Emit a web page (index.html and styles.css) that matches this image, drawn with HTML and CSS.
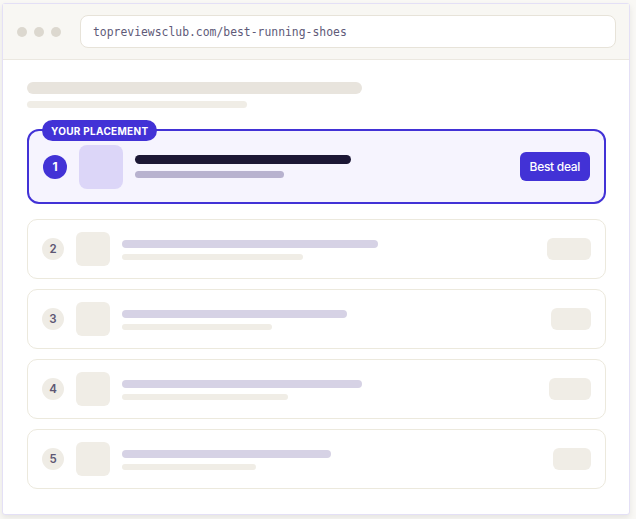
FILE: index.html
```html
<!DOCTYPE html>
<html>
<head>
<meta charset="utf-8">
<link rel="stylesheet" href="styles.css">
</head>
<body>
<div class="window">
  <div class="titlebar">
    <div class="dots"><span class="dot"></span><span class="dot"></span><span class="dot"></span></div>
    <div class="url">topreviewsclub.com/best-running-shoes</div>
  </div>
  <div class="content">
    <div class="sk-title"></div>
    <div class="sk-sub"></div>
    <div class="list">
      <div class="row featured">
        <span class="badge">YOUR PLACEMENT</span>
        <span class="rank">1</span>
        <span class="thumb"></span>
        <div class="lines">
          <span class="l1" style="width:216px"></span>
          <span class="l2" style="width:149px"></span>
        </div>
        <span class="cta">Best deal</span>
      </div>
      <div class="row">
        <span class="rank">2</span>
        <span class="thumb"></span>
        <div class="lines">
          <span class="l1" style="width:256px"></span>
          <span class="l2" style="width:181px"></span>
        </div>
        <span class="pill" style="width:44px"></span>
      </div>
      <div class="row">
        <span class="rank">3</span>
        <span class="thumb"></span>
        <div class="lines">
          <span class="l1" style="width:225px"></span>
          <span class="l2" style="width:150px"></span>
        </div>
        <span class="pill" style="width:40px"></span>
      </div>
      <div class="row">
        <span class="rank">4</span>
        <span class="thumb"></span>
        <div class="lines">
          <span class="l1" style="width:240px"></span>
          <span class="l2" style="width:166px"></span>
        </div>
        <span class="pill" style="width:42px"></span>
      </div>
      <div class="row">
        <span class="rank">5</span>
        <span class="thumb"></span>
        <div class="lines">
          <span class="l1" style="width:209px"></span>
          <span class="l2" style="width:134px"></span>
        </div>
        <span class="pill" style="width:38px"></span>
      </div>
    </div>
  </div>
</div>
</body>
</html>
```

FILE: styles.css
```css
* { box-sizing: border-box; }
html, body { margin: 0; padding: 0; }
body {
  background: #f9f8f5;
  font-family: Inter, "Noto Sans", sans-serif;
  width: 636px;
  height: 519px;
  overflow: hidden;
}
.window {
  margin: 3px 0 0 2px;
  width: 628px;
  height: 512px;
  background: #ffffff;
  border: 1px solid #e4e0f6;
  border-radius: 3px;
  box-shadow: 0 3px 6px rgba(0, 0, 0, 0.08);
  display: flex;
  flex-direction: column;
}
.titlebar {
  height: 56px;
  background: #f8f7f3;
  border-bottom: 1px solid #ebe8e0;
  display: flex;
  align-items: center;
  padding: 0 13px 0 14px;
  gap: 19px;
}
.dots { display: flex; gap: 7px; }
.dot {
  width: 10px;
  height: 10px;
  border-radius: 50%;
  background: #dcd8cf;
}
.url {
  flex: 1;
  height: 33px;
  background: #ffffff;
  border: 1px solid #e7e3d9;
  border-radius: 8px;
  display: flex;
  align-items: center;
  padding-left: 12px;
  font-family: "DejaVu Sans Mono", "Liberation Mono", monospace;
  font-size: 11.4px;
  color: #605a78;
}
.content {
  padding: 22px 23px 0 24px;
}
.sk-title {
  width: 335px;
  height: 12px;
  border-radius: 6px;
  background: #e8e4dd;
}
.sk-sub {
  margin-top: 7px;
  width: 220px;
  height: 7px;
  border-radius: 4px;
  background: #f0ede6;
}
.list {
  margin-top: 21px;
  display: flex;
  flex-direction: column;
  gap: 10px;
}
.row {
  position: relative;
  height: 60px;
  border: 1px solid #ece9dd;
  border-radius: 10px;
  display: flex;
  align-items: center;
  padding: 0 14px;
}
.row .rank {
  width: 22px;
  height: 22px;
  border-radius: 50%;
  background: #efece5;
  color: #5d5773;
  font-size: 11.5px;
  font-weight: 600;
  display: flex;
  align-items: center;
  justify-content: center;
  flex-shrink: 0;
}
.row .thumb {
  margin-left: 12px;
  width: 34px;
  height: 34px;
  border-radius: 6px;
  background: #f0ede6;
  flex-shrink: 0;
}
.lines {
  margin-left: 12px;
  display: flex;
  flex-direction: column;
  gap: 6px;
  flex: 1;
  padding-top: 1px;
}
.lines span { display: block; }
.row .l1 {
  height: 8px;
  border-radius: 4px;
  background: #d6d2e5;
}
.row .l2 {
  height: 6px;
  border-radius: 3px;
  background: #f0ede6;
}
.pill {
  height: 22px;
  border-radius: 6px;
  background: #f0ede6;
}
.row.featured {
  height: 75px;
  margin-bottom: 5px;
  border: 2px solid #4232d6;
  border-radius: 12px;
  background: #f6f4fe;
}
.badge {
  position: absolute;
  top: -11px;
  left: 13px;
  height: 21px;
  padding: 0 9px;
  border-radius: 11px;
  background: #4232d6;
  color: #ffffff;
  font-size: 10px;
  font-weight: 700;
  letter-spacing: 0.3px;
  display: flex;
  align-items: center;
}
.row.featured .rank {
  width: 24px;
  height: 24px;
  background: #4232d6;
  color: #ffffff;
  font-size: 12px;
  font-weight: 700;
}
.row.featured .thumb {
  width: 44px;
  height: 44px;
  border-radius: 8px;
  background: #dcd6f8;
}
.row.featured .lines { gap: 7px; padding-top: 0; }
.row.featured .l1 {
  height: 9px;
  border-radius: 5px;
  background: #1c1735;
}
.row.featured .l2 {
  height: 7px;
  border-radius: 4px;
  background: #b8b2cf;
}
.cta {
  height: 29px;
  padding: 0 10px;
  border-radius: 6px;
  background: #4232d6;
  color: #ffffff;
  font-size: 12px;
  font-weight: 500;
  display: flex;
  align-items: center;
  letter-spacing: -0.3px;
}
```
